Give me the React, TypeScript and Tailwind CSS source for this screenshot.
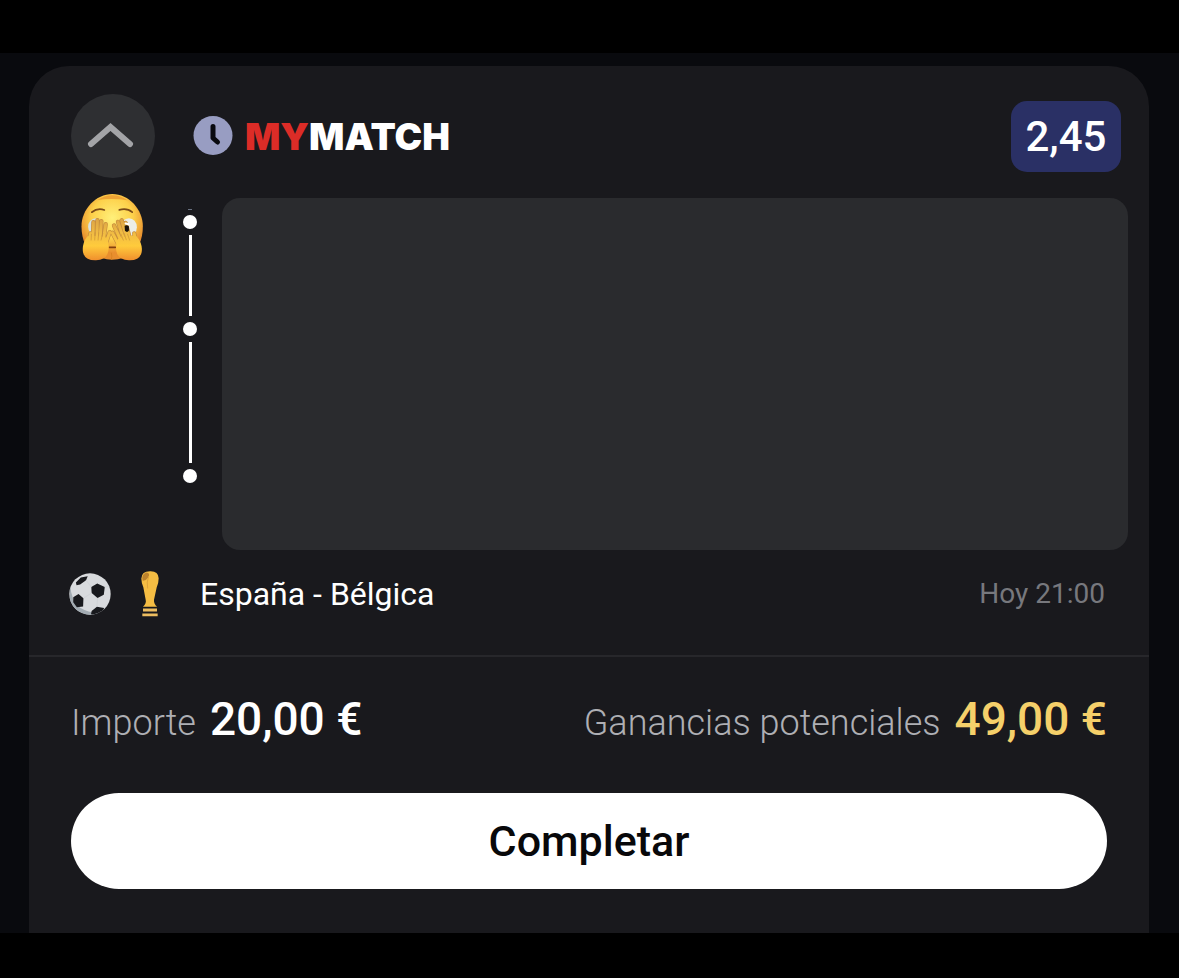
import React from 'react';

function ChevronUp() {
  return (
    <svg viewBox="0 0 84 84" className="size-full" fill="none" aria-hidden="true">
      <path d="M20 50 L39.500 33 L59 50" stroke="#a3a4a7" strokeWidth="6" strokeLinecap="round" strokeLinejoin="miter" />
    </svg>
  );
}

function Clock() {
  return (
    <svg viewBox="0 0 40 40" className="size-10 shrink-0" fill="none" aria-hidden="true">
      <circle cx="20" cy="19.500" r="19.500" fill="#989dc2" />
      <path d="M20 10.500 V22 L24.500 26" stroke="#090a10" strokeWidth="5" strokeLinecap="round" strokeLinejoin="round" />
    </svg>
  );
}

const LEFT_FINGERS = 'M91 442 L86 470 M100 408 L98 470 M112 402 L110 470 M124 405 L119 470 M137 414 L129 470 M149 438 L136 476';
const RIGHT_FINGERS = 'M223 442 L228 470 M162 418 L186 470 M174 407 L194 468 M185 402 L204 468 M197 410 L213 468 M157 440 L178 480';

function PeekingFace() {
  return (
    <svg viewBox="60 320 192 208" className="h-[69px] w-16" fill="none" role="img" aria-label="Cara que espía entre los dedos">
      <defs>
        <radialGradient id="face" cx="157" cy="395" r="105" gradientUnits="userSpaceOnUse">
          <stop offset="0" stopColor="#fff07a" />
          <stop offset=".6" stopColor="#fdd04a" />
          <stop offset="1" stopColor="#e88e2e" />
        </radialGradient>
        <linearGradient id="hand" x1="0" y1="395" x2="0" y2="525" gradientUnits="userSpaceOnUse">
          <stop offset="0" stopColor="#dba244" />
          <stop offset=".4" stopColor="#f3bf43" />
          <stop offset=".65" stopColor="#ffcb3c" />
          <stop offset="1" stopColor="#ef8c2c" />
        </linearGradient>
      </defs>
      <path d="M157 323 C207 323 249 370 249 420 C249 480 218 520 157 521 C96 520 64 480 64 420 C64 370 107 323 157 323Z" fill="url(#face)" />
      <path d="M112 341 Q157 312 203 342 Q157 334 112 341Z" fill="#e58c2b" opacity=".65" />
      <path d="M95 378 Q112 364 133 371 M178 371 Q201 364 217 378" stroke="#7a4a18" strokeWidth="5" strokeLinecap="round" />
      <ellipse cx="107" cy="422" rx="23" ry="26" fill="#d9e1df" />
      <ellipse cx="207" cy="423" rx="24" ry="27" fill="#eceee8" />
      <path d="M148 484 H166" stroke="#83400f" strokeWidth="5" strokeLinecap="round" />
      <path d="M154 500 Q157 512 154 521" stroke="#d98322" strokeWidth="3" />
      <path d={LEFT_FINGERS} stroke="#c58c3c" strokeWidth="13" strokeLinecap="round" />
      <path d={RIGHT_FINGERS} stroke="#c58c3c" strokeWidth="13" strokeLinecap="round" />
      <path d={LEFT_FINGERS} stroke="url(#hand)" strokeWidth="9" strokeLinecap="round" />
      <path d={RIGHT_FINGERS} stroke="url(#hand)" strokeWidth="9" strokeLinecap="round" />
      <path d="M82 450 C68 468 66 486 69 500 Q75 524 108 523 Q140 522 145 495 Q148 473 141 455 Q112 446 82 450Z" fill="url(#hand)" />
      <path d="M230 450 C246 468 248 486 245 500 Q239 524 207 523 Q174 522 169 495 Q166 473 174 458 Q205 446 230 450Z" fill="url(#hand)" />
      <path d="M94 444 L93 462 M105 440 L104 462 M116 440 L114 462 M128 442 L123 462 M183 444 L190 462 M193 442 L199 461 M203 444 L209 462" stroke="#c98f36" strokeWidth="2" strokeLinecap="round" />
      <path d="M194 419 Q201 414 207 421 L207 433 Q202 441 195 434Z" fill="#19130d" />
      <path d="M197 412 L206 414" stroke="#fff" strokeWidth="6" strokeLinecap="round" />
    </svg>
  );
}

function Football() {
  return (
    <svg viewBox="38 51 132 134" className="size-11 shrink-0" aria-hidden="true">
      <defs>
        <clipPath id="ball"><circle cx="104" cy="118" r="63" /></clipPath>
      </defs>
      <g clipPath="url(#ball)">
        <rect x="38" y="51" width="132" height="134" fill="#d8dadd" />
        <path d="M44 90 Q46 140 74 160 Q100 176 132 175 L130 187 H38Z" fill="#a2abb2" />
        <path d="M108 97 L126 86 L149 97 L146 120 L127 130 L109 115Z M61 83 L76 68 L97 64 L92 76 L74 89 L63 91Z M53 128 L69 118 L84 131 L83 156 L64 158 L53 143Z M109 170 L125 157 L147 161 L141 177 L119 185 L107 180Z" fill="#18191d" />
        <path d="M92 76 L108 97 M109 115 L85 130 M127 130 L125 156 M149 97 L166 93" stroke="#cbced2" strokeWidth="2" />
      </g>
    </svg>
  );
}

function Trophy() {
  return (
    <svg viewBox="256 48 60 140" className="h-[47px] w-5 shrink-0" aria-hidden="true">
      <path d="M286 51 Q311 50 312 72 Q312 86 306 100 L298 137 Q297 149 307 158 H265 Q276 148 273 137 L266 99 Q260 85 260 73 Q261 51 286 51Z" fill="#f5bd43" />
      <path d="M264 80 Q259 60 275 55 Q289 57 280 71 Q273 81 264 80Z" fill="#bd832d" />
      <path d="M282 66 Q275 83 279 103" stroke="#dea33a" strokeWidth="3" fill="none" />
      <path d="M265 163 H307 V172 H265Z M263 178 H309 V186 H263Z" fill="#edbd60" />
    </svg>
  );
}

function Timeline() {
  return (
    <div className="flex w-4 flex-col items-center pt-[11px]" aria-hidden="true">
      <span className="h-px w-1 bg-gray-500" />
      <span className="mt-[5px] size-3.5 rounded-full bg-white" />
      <span className="my-1.5 h-[81px] w-[3px] bg-white" />
      <span className="size-3.5 rounded-full bg-white" />
      <span className="my-1.5 h-[121px] w-[3px] bg-white" />
      <span className="size-3.5 rounded-full bg-white" />
    </div>
  );
}

export default function App() {
  return (
    <div className="flex min-h-screen flex-col bg-black pt-[53px] pb-[45px] font-['Roboto',sans-serif] text-white">
      <main className="flex grow flex-col bg-[#090a0e] pt-[13px] pr-[30px] pl-[29px]">
        <article className="grow rounded-t-[40px] bg-[#19191d] pt-7 pb-10">
          <header className="flex items-center pr-7 pl-[42px]">
            <button type="button" aria-label="Contraer apuesta" className="size-[84px] rounded-full bg-[#2e2f32]">
              <ChevronUp />
            </button>
            <div className="ml-[38px] flex items-center gap-3">
              <Clock />
              <h1 className="pt-0.5 font-['Inter',sans-serif] text-[37px] leading-10 font-black">
                <span className="text-[#dc2c27]">MY</span>MATCH
              </h1>
            </div>
            <span className="ml-auto flex h-[71px] w-[110px] items-center justify-center rounded-2xl bg-[#2a3065] text-[42px] font-medium">2,45</span>
          </header>

          <div className="mt-5 flex pr-[21px] pl-[42px]">
            <div className="-mt-[5px] flex w-[82px] justify-center">
              <PeekingFace />
            </div>
            <div className="ml-[29px]">
              <Timeline />
            </div>
            <div className="ml-6 h-[352px] grow rounded-[18px] bg-[#2a2b2e]" />
          </div>

          <div className="flex h-[107px] items-center border-b-2 border-[#27272b] pr-11 pb-[18px] pl-[39px]">
            <Football />
            <div className="ml-7"><Trophy /></div>
            <h2 className="ml-10 text-[32px] leading-10">España - Bélgica</h2>
            <time className="ml-auto text-[28px] leading-10 text-[#77787d]">Hoy 21:00</time>
          </div>

          <dl className="flex justify-between px-[42px] pt-8">
            <div className="flex items-baseline gap-3.5">
              <dt className="text-[36px] leading-[60px] font-light text-[#aeafb4]">Importe</dt>
              <dd className="text-[46px] leading-[60px] font-medium">20,00 €</dd>
            </div>
            <div className="flex items-baseline gap-3.5">
              <dt className="text-[36px] leading-[60px] font-light text-[#aeafb4]">Ganancias potenciales</dt>
              <dd className="text-[46px] leading-[60px] font-medium text-[#f5d06a]">49,00 €</dd>
            </div>
          </dl>

          <div className="px-[42px] pt-10">
            <button type="button" className="h-24 w-full rounded-full bg-white text-[43px] font-medium text-[#08080a]">Completar</button>
          </div>
        </article>
      </main>
    </div>
  );
}
